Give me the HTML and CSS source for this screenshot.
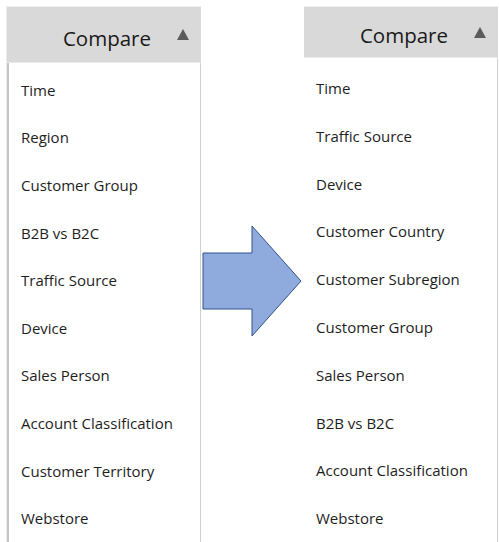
FILE: index.html
```html
<!DOCTYPE html>
<html>
<head>
<meta charset="utf-8">
<link rel="stylesheet" href="styles.css">
</head>
<body>
<div class="stage">
  <div class="panel panel-left">
    <div class="header"><span class="title">Compare</span><span class="caret"></span></div>
    <ul class="list">
      <li>Time</li>
      <li>Region</li>
      <li>Customer Group</li>
      <li>B2B vs B2C</li>
      <li>Traffic Source</li>
      <li>Device</li>
      <li>Sales Person</li>
      <li>Account Classification</li>
      <li>Customer Territory</li>
      <li>Webstore</li>
    </ul>
  </div>
  <div class="arrow-col">
    <svg class="arrow" width="102" height="114" viewBox="0 0 102 114">
      <polygon points="1,28 50,28 50,1 99,56 50,111 50,84 1,84" fill="#8faadc" stroke="#2f528f" stroke-width="1"/>
    </svg>
  </div>
  <div class="panel panel-right">
    <div class="header"><span class="title">Compare</span><span class="caret"></span></div>
    <ul class="list">
      <li>Time</li>
      <li>Traffic Source</li>
      <li>Device</li>
      <li>Customer Country</li>
      <li>Customer Subregion</li>
      <li>Customer Group</li>
      <li>Sales Person</li>
      <li>B2B vs B2C</li>
      <li>Account Classification</li>
      <li>Webstore</li>
    </ul>
  </div>
</div>
</body>
</html>
```
FILE: styles.css
```css
html, body {
  margin: 0;
  padding: 0;
  background: #ffffff;
}
body {
  font-family: "Open Sans", "Noto Sans", "Liberation Sans", sans-serif;
  color: #1e1e1e;
  width: 499px;
  height: 542px;
  overflow: hidden;
}
.stage {
  display: flex;
  align-items: flex-start;
  padding-top: 6px;
  padding-left: 6px;
}
.panel {
  display: flex;
  flex-direction: column;
  height: 536px;
  box-sizing: border-box;
}
.panel-left {
  width: 195px;
  border-top: 1px solid #efefef;
  border-left: 1px solid #eeeeee;
}
.panel-right {
  width: 194px;
  border-top: 1px solid #efefef;
}
.header {
  height: 59px;
  background: #d9d9d9;
  display: flex;
  align-items: center;
  justify-content: flex-end;
  padding-right: 12px;
  border-bottom: 1px solid #ebebeb;
}
.title {
  font-size: 20.5px;
  color: #1a1a1a;
  margin-right: 26px;
  position: relative;
  top: 3px;
}
.caret {
  width: 0;
  height: 0;
  border-left: 6px solid transparent;
  border-right: 6px solid transparent;
  border-bottom: 11px solid #5b5b5b;
}
.list {
  list-style: none;
  margin: 0;
  padding: 0;
  flex: 1;
  background: #ffffff;
  border-right: 1px solid #cfcfcf;
}
.panel-left .list {
  border-left: 2px solid #c4c4c4;
  padding-top: 3px;
}
.panel-right .list {
  padding-top: 6px;
}
.list li {
  height: 47.6px;
  display: flex;
  align-items: center;
  font-size: 15px;
  padding-left: 12px;
  white-space: nowrap;
}
.panel-right .list li {
  height: 47.8px;
}
.arrow-col {
  width: 103px;
  display: flex;
  justify-content: center;
  padding-top: 219px;
}
.arrow {
  display: block;
}
```
